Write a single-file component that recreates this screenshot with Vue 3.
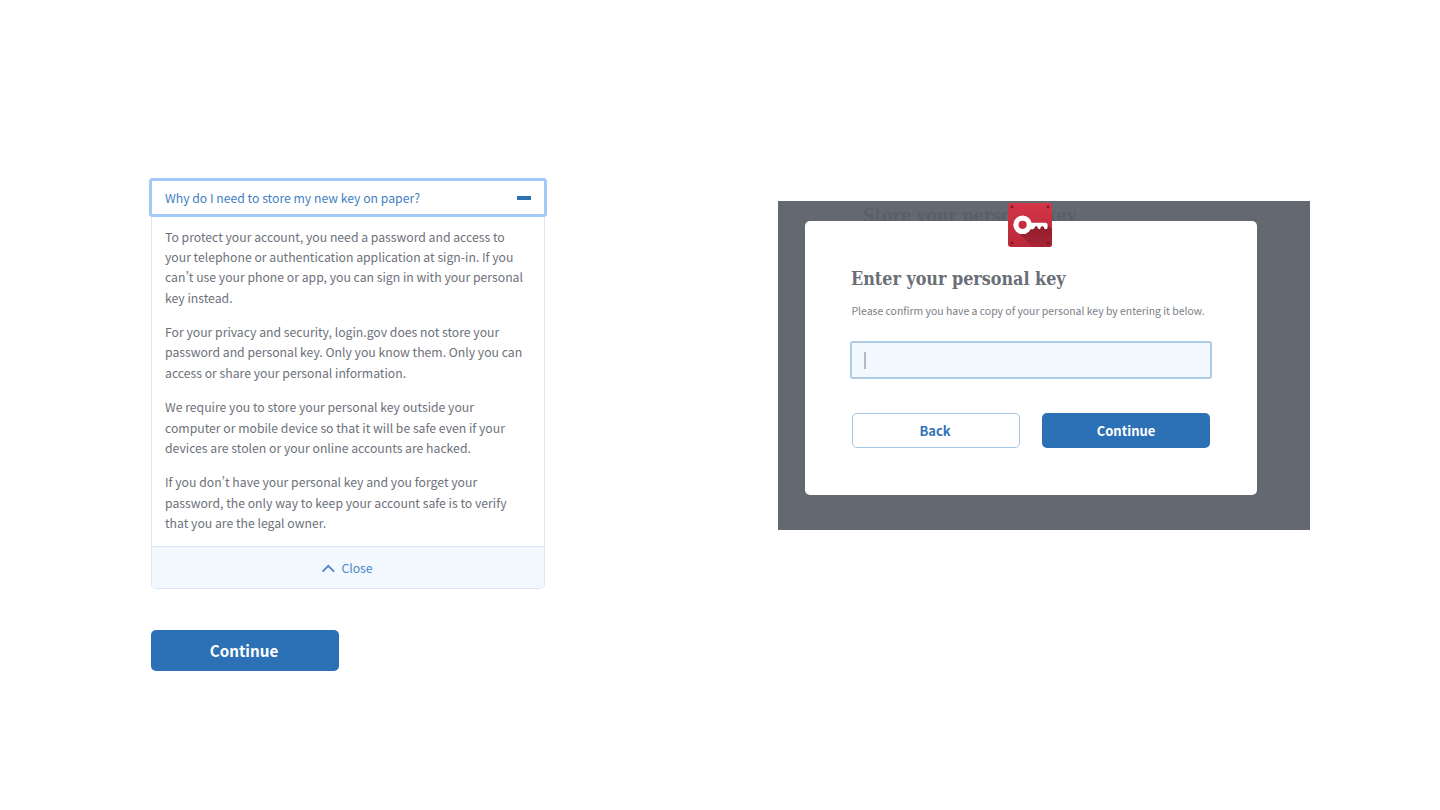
<script setup>
const paragraphs = [
  [
    'To protect your account, you need a password and access to',
    'your telephone or authentication application at sign-in. If you',
    'can’t use your phone or app, you can sign in with your personal',
    'key instead.',
  ],
  [
    'For your privacy and security, login.gov does not store your',
    'password and personal key. Only you know them. Only you can',
    'access or share your personal information.',
  ],
  [
    'We require you to store your personal key outside your',
    'computer or mobile device so that it will be safe even if your',
    'devices are stolen or your online accounts are hacked.',
  ],
  [
    'If you don’t have your personal key and you forget your',
    'password, the only way to keep your account safe is to verify',
    'that you are the legal owner.',
  ],
]
</script>

<template>
  <main class="page">
    <section class="info">
      <div class="accordion">
        <button class="accordion-head">
          <span>Why do I need to store my new key on paper?</span>
          <i class="minus"></i>
        </button>
        <div class="panel">
          <div class="copy">
            <p v-for="(lines, i) in paragraphs" :key="i">
              <span v-for="line in lines" :key="line" class="line">{{ line }}</span>
            </p>
          </div>
          <button class="close">
            <svg width="14" height="10" viewBox="0 0 14 10"><path d="M1.6 8.6 7.3 2.9l5.7 5.7" fill="none" stroke="#4a88c7" stroke-width="1.9" /></svg>
            <span>Close</span>
          </button>
        </div>
      </div>
      <button class="primary primary-large"><span>Continue</span></button>
    </section>

    <section class="backdrop">
      <div class="ghost">Store your personal key</div>
      <div class="dialog">
        <svg class="badge" width="46" height="46" viewBox="0 0 46 46">
          <defs>
            <linearGradient id="plate" x1="0" y1="0" x2="0" y2="1">
              <stop offset="0" stop-color="#d43547" />
              <stop offset="1" stop-color="#b92839" />
            </linearGradient>
            <linearGradient id="shade" x1="0" y1="0" x2="0" y2="1">
              <stop offset="0" stop-color="#8f1c2b" />
              <stop offset="1" stop-color="#a82535" />
            </linearGradient>
          </defs>
          <rect x="1" y="1" width="44" height="44" rx="3" fill="url(#plate)" />
          <path d="M10 29 25.5 45H42a3 3 0 0 0 3-3V27.5L40.5 23 22 24Z" fill="url(#shade)" />
          <g fill="#7c1a26">
            <circle cx="5" cy="5" r="1.4" /><circle cx="41" cy="5" r="1.4" />
            <circle cx="5" cy="41" r="1.4" /><circle cx="41" cy="41" r="1.4" />
          </g>
          <circle cx="15.6" cy="22.8" r="6.7" fill="#c52e3e" stroke="#fff" stroke-width="5.2" />
          <path d="M22.5 20.8H38q2.6 0 2.6 2.4v1.7q0 2.3-1.9 2.3t-1.9-2.1l-1.5-1.1-1.5 1.1q0 2.1-1.6 2.1t-1.7-2.1L29.2 24l-1.4 1.1q0 2.1-1.8 2.1h-3.5Z" fill="#fff" />
        </svg>
        <h1>Enter your personal key</h1>
        <p class="hint">Please confirm you have a copy of your personal key by entering it below.</p>
        <div class="field"><i class="caret"></i></div>
        <div class="actions">
          <button class="secondary"><span>Back</span></button>
          <button class="primary"><span>Continue</span></button>
        </div>
      </div>
    </section>
  </main>
</template>

<style>
body { background: #fff; }
</style>

<style scoped>
* { box-sizing: border-box; }
.page {
  display: flex;
  align-items: flex-start;
  width: 1440px;
  height: 810px;
  overflow: hidden;
  padding-left: 149px;
  font-family: "Noto Sans CJK SC", sans-serif;
  color: #6d717a;
}
button { font: inherit; border: 0; margin: 0; padding: 0; background: none; white-space: nowrap; }
.info { width: 398px; padding-top: 178px; }
.accordion-head {
  display: flex;
  align-items: center;
  justify-content: space-between;
  width: 398px;
  height: 39px;
  padding: 0 13px 0 13px;
  border: 3px solid #a3c9fb;
  border-radius: 3.5px;
  background: #fff;
  color: #4380c1;
  font-size: 12.22px;
}
.minus { width: 14px; height: 4px; background: #2e72b4; }
.panel {
  margin: 0 2px;
  border: 1px solid #dce6f2;
  border-width: 0 1px 1px;
  border-radius: 0 0 5px 5px;
  overflow: hidden;
}
.copy { height: 329px; padding: 9.5px 13px 0; font-size: 12.22px; line-height: 20.45px; font-feature-settings: "pwid" 1; }
.copy p { margin: 0 0 13.7px; }
.line { display: block; white-space: nowrap; }
.close {
  display: flex;
  align-items: center;
  justify-content: center;
  gap: 6px;
  width: 100%;
  height: 42px;
  padding-right: 2px;
  border-top: 1px solid #d7e3f1;
  background: #f3f8ff;
  color: #4a88c7;
  font-size: 12.22px;
}
.primary { background: #2c71b5; color: #fff; font-weight: 700; border-radius: 5px; }
.primary-large { display: block; width: 188px; height: 41px; margin: 41px 0 0 2px; padding: 0 2px 2px 0; font-size: 15.2px; }
.backdrop {
  position: relative;
  width: 532px;
  height: 329px;
  margin: 201px 0 0 231px;
  padding: 20px 0 0 27px;
  background: #646870;
}
.ghost, h1 { font-family: "DejaVu Serif Condensed", "DejaVu Serif", serif; font-weight: 700; font-size: 17.8px; line-height: 24px; white-space: nowrap; }
.ghost { position: absolute; left: 85px; top: 3px; color: #5b5f67; }
.dialog {
  position: relative;
  width: 452px;
  height: 274px;
  padding: 46px 45px 0 46px;
  border-radius: 5px;
  background: #fff;
}
.badge { position: absolute; left: 202px; top: -19px; }
h1 { margin: 0; color: #6a6e76; }
.hint { margin: 11px 0 0 0.5px; font-size: 10.43px; line-height: 18px; white-space: nowrap; color: #7b7e86; }
.field {
  width: 362px;
  height: 38px;
  margin: 21px 0 0 -1px;
  padding: 9px 12px;
  border: 2px solid #aecbe6;
  border-radius: 3px;
  background: #f3f8ff;
}
.caret { display: block; width: 1.5px; height: 17px; background: #b3b9c6; }
.actions { display: flex; justify-content: space-between; width: 358px; margin: 34px 0 0 1px; font-size: 13px; }
.actions button { width: 168px; height: 35px; }
.secondary { padding-right: 2px; border: 1.5px solid #a6c6e5; border-radius: 5px; color: #3474b8; font-weight: 700; }
</style>
